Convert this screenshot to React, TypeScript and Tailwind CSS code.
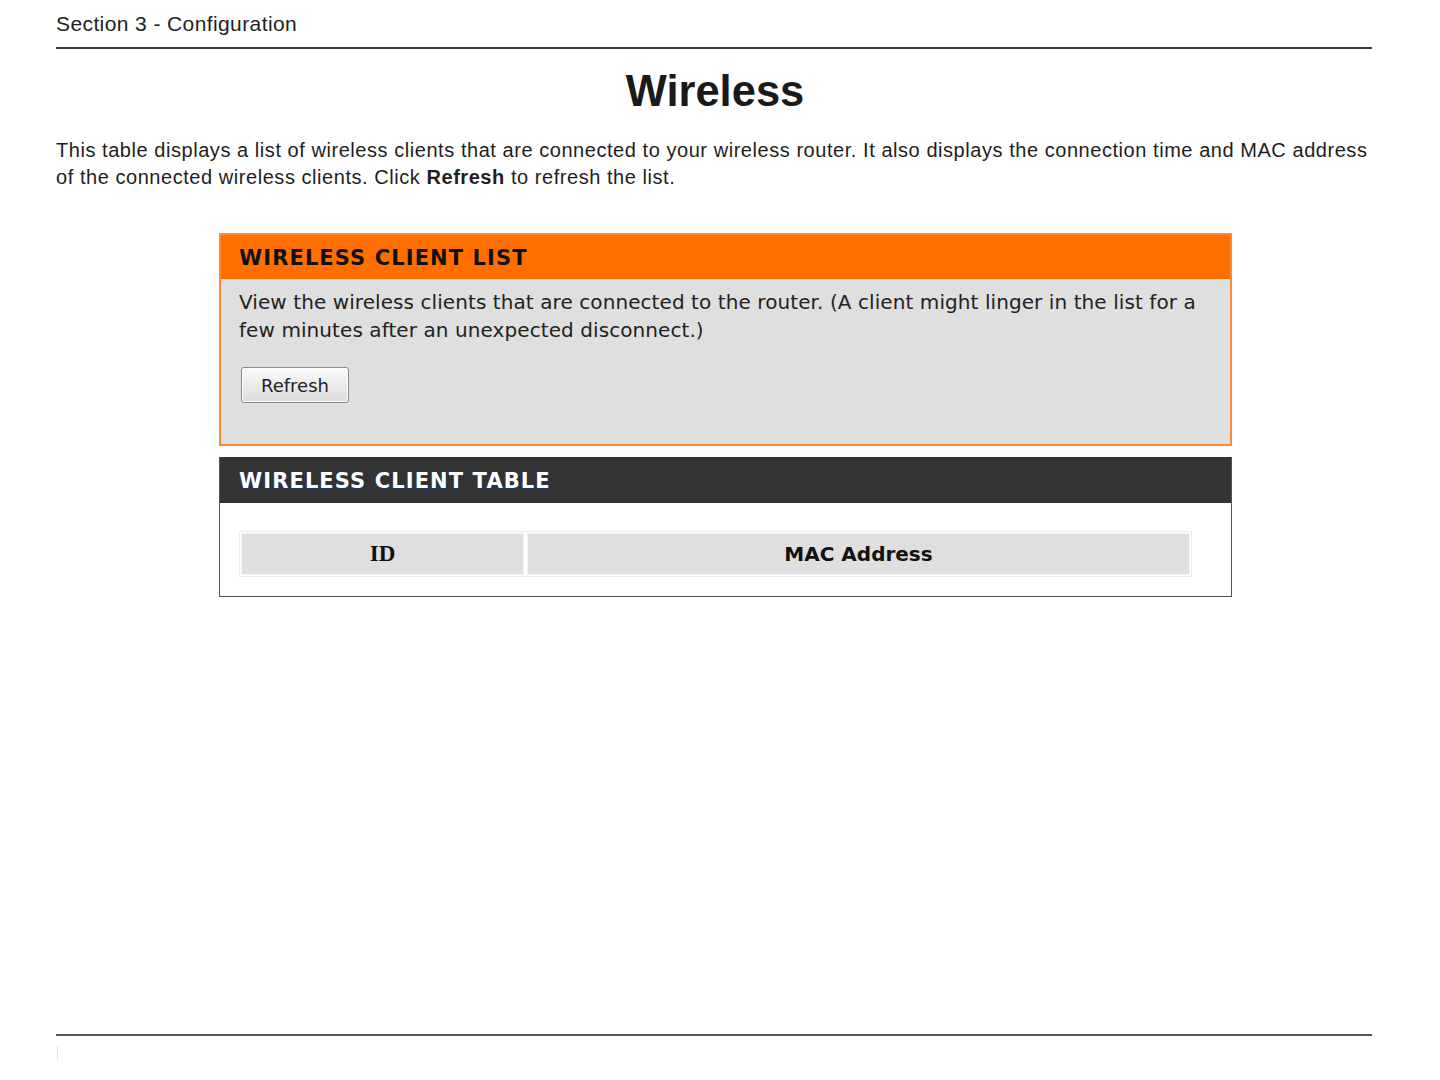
export default function App() {
  return (
    <div className="min-h-[1080px] w-[1440px] bg-white flex flex-col">
      <div className="mx-[56px] w-[1316px] flex flex-col grow">
        <div
          className="pt-[11px] h-[47px] text-[21px] leading-[26px] text-[#222] tracking-[0.4px]"
          style={{ fontFamily: '"Liberation Sans", Arial, sans-serif' }}
        >
          Section 3 - Configuration
        </div>
        <div className="h-[2px] bg-[#3a3a3a]" />
        <h1
          className="mt-[16px] text-center font-bold text-[43.5px] leading-[52px] text-[#1a1a1a] pl-[2px]"
          style={{ fontFamily: '"Liberation Sans", Arial, sans-serif' }}
        >
          Wireless
        </h1>
        <p
          className="mt-[20px] text-[20px] leading-[27px] text-[#1e1e1e] tracking-[0.55px] whitespace-nowrap"
          style={{ fontFamily: '"Liberation Sans", Arial, sans-serif' }}
        >
          This table displays a list of wireless clients that are connected to your wireless router. It also displays the
          connection time and MAC address
          <br />
          of the connected wireless clients. Click <b>Refresh</b> to refresh the list.
        </p>

        <div className="ml-[163px] w-[1013px] mt-[42px]" style={{ fontFamily: '"DejaVu Sans", Verdana, sans-serif' }}>
          <div className="border-2 border-[#ff8a33]">
            <div className="bg-[#ff6f00] h-[44px] flex items-center px-[18px] pt-[3px]">
              <span className="font-bold text-[21px] tracking-[1.1px] text-[#111]">WIRELESS CLIENT LIST</span>
            </div>
            <div className="bg-[#dfdfdf] px-[18px] pt-[9px] pb-[41px]">
              <p className="text-[20px] leading-[28px] text-[#222] tracking-[0.08px] whitespace-nowrap">
                View the wireless clients that are connected to the router. (A client might linger in the list for a
                <br />
                few minutes after an unexpected disconnect.)
              </p>
              <button className="mt-[23px] ml-[2px] w-[108px] h-[36px] rounded-[3px] border border-[#8a8a8a] bg-gradient-to-b from-[#fbfbfb] to-[#dcdcdc] text-[18px] text-[#222] shadow-[inset_0_0_0_1px_#fff]">
                Refresh
              </button>
            </div>
          </div>

          <div className="mt-[11px] border border-[#555] border-t-0">
            <div className="bg-[#333333] h-[46px] flex items-center px-[19px] pt-[4px]">
              <span className="font-bold text-[21px] tracking-[1.1px] text-white [text-shadow:1px_1px_0_#1a3a6a]">
                WIRELESS CLIENT TABLE
              </span>
            </div>
            <div className="bg-white px-[19px] pt-[28px] pb-[19px]">
              <div className="w-[953px] border border-[#ececec] p-px flex gap-[3px]">
                <div
                  className="w-[283px] h-[42px] bg-[#dfdfdf] border border-[#f4f4f4] flex items-center justify-center font-bold text-[23px] text-[#111]"
                  style={{ fontFamily: '"Liberation Serif", "Times New Roman", serif' }}
                >
                  ID
                </div>
                <div className="grow h-[42px] bg-[#dfdfdf] border border-[#f4f4f4] flex items-center justify-center font-bold text-[20px] text-[#111]">
                  MAC Address
                </div>
              </div>
            </div>
          </div>
        </div>

        <div className="grow" />
        <div className="h-[2px] bg-[#555] mb-[10px]" />
        <div className="ml-[1px] w-px h-[14px] bg-[#f5e79a] mb-[20px]" />
      </div>
    </div>
  );
}
